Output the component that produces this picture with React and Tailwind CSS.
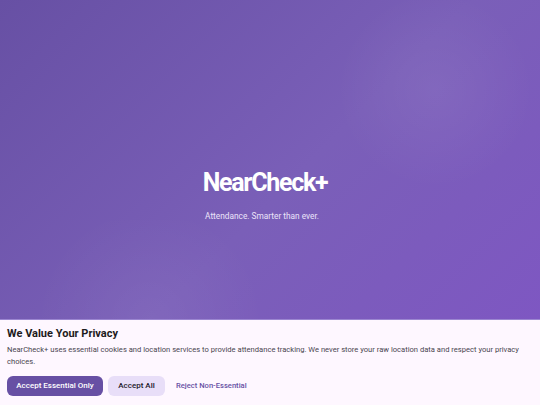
export default function App() {
  return (
    <div className="relative w-[540px] h-[405px] overflow-hidden flex flex-col font-['Roboto',sans-serif]">
      <div className="relative flex-1 flex flex-col items-center justify-center pr-[16px] bg-[linear-gradient(135deg,#6750a4_0%,#7a5fb8_55%,#7e57c2_100%)] overflow-hidden">
        <div className="absolute w-[200px] h-[200px] rounded-full left-[335px] top-[-10px] bg-[radial-gradient(circle,rgba(255,255,255,0.06)_0%,rgba(255,255,255,0)_70%)]" />
        <div className="absolute w-[260px] h-[200px] rounded-full left-[20px] top-[220px] bg-[radial-gradient(circle,rgba(255,255,255,0.05)_0%,rgba(255,255,255,0)_70%)]" />
        <h1 className="relative mt-[70px] ml-[6px] text-[25px] leading-[30px] font-bold text-white tracking-[-1.3px]">NearCheck+</h1>
        <p className="relative mt-[12px] text-[8.3px] leading-[12px] text-[#ece4fa]">Attendance. Smarter than ever.</p>
      </div>
      <div className="h-[86px] bg-[#fef7ff] border-t border-[#9b86d0] px-[7px] pt-[7px]">
        <h2 className="text-[11px] leading-[14px] font-bold text-[#1d1b20]">We Value Your Privacy</h2>
        <p className="mt-[3px] text-[7.6px] leading-[12px] text-[#49454f]">NearCheck+ uses essential cookies and location services to provide attendance tracking. We never store your raw location data and respect your privacy choices.</p>
        <div className="mt-[8px] flex items-center gap-[5px]">
          <button className="h-[20px] w-[96px] rounded-[6px] bg-[#6750a4] text-white text-[8px] font-medium">Accept Essential Only</button>
          <button className="h-[20px] w-[57px] rounded-[6px] bg-[#e8def8] text-[#1d192b] text-[8px] font-medium">Accept All</button>
          <button className="h-[20px] px-[6px] text-[#6750a4] text-[7.6px] font-medium">Reject Non-Essential</button>
        </div>
      </div>
    </div>
  );
}
